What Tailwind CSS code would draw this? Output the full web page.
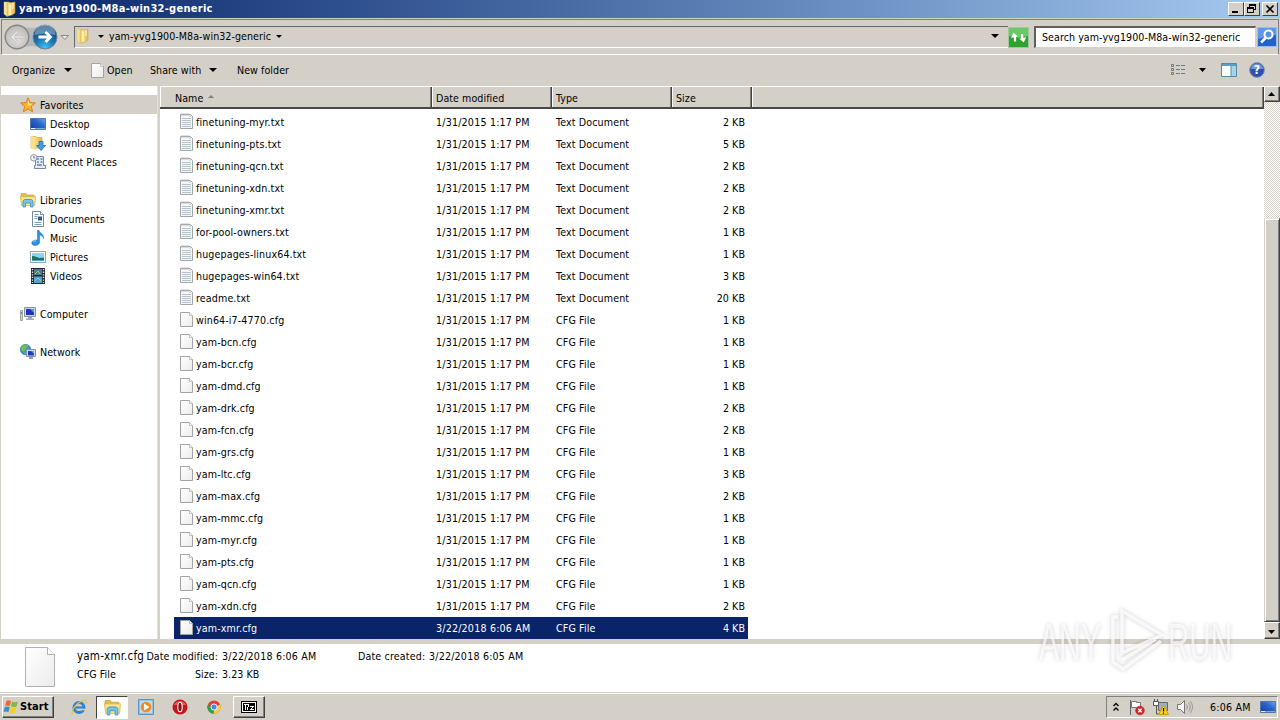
<!DOCTYPE html>
<html lang="en">
<head>
  <meta charset="UTF-8" />
  <title>yam-yvg1900-M8a-win32-generic</title>

  <script src="https://cdn.jsdelivr.net/npm/@tailwindcss/browser@4"></script>
</head>
<body class="w-[1280px] h-[720px] overflow-hidden bg-[#d4d0c8] text-black text-[10.6px] leading-[14px] tracking-[0.06px] font-['DejaVu_Sans_Condensed','DejaVu_Sans',sans-serif] font-stretch-condensed whitespace-nowrap flex flex-col relative">

  <!-- shared icons -->
  <svg class="absolute w-0 h-0">
    <defs>
      <linearGradient id="gold" x1="0" x2="1"><stop offset="0" stop-color="#fff3a8" /><stop offset="1" stop-color="#e3b544" /></linearGradient>
      <linearGradient id="screen" x1="0" y1="1" x2="1" y2="0"><stop offset="0" stop-color="#123a9c" /><stop offset=".6" stop-color="#2c68cf" /><stop offset="1" stop-color="#6ca8ec" /></linearGradient>
      <linearGradient id="page" x1="0" y1="0" x2="1" y2="1"><stop offset="0" stop-color="#fff" /><stop offset="1" stop-color="#ececec" /></linearGradient>
      <radialGradient id="bluebtn" cx=".5" cy=".95" r=".9"><stop offset="0" stop-color="#3cc4f4" /><stop offset=".5" stop-color="#1b6fae" /><stop offset="1" stop-color="#16406f" /></radialGradient>
      <radialGradient id="graybtn" cx=".5" cy=".6" r=".6"><stop offset="0" stop-color="#e4e2de" /><stop offset="1" stop-color="#b9b7b4" /></radialGradient>
    </defs>
    <symbol id="folder" viewBox="0 0 16 16">
      <path d="M2 1h5l1 1v12l-3 1.500L2 13z" fill="url(#gold)" stroke="#d6b04a" stroke-width=".5" />
      <path d="M6 2l7-1v11l-3 2-4 1z" fill="url(#gold)" stroke="#c99f35" stroke-width=".5" />
      <path d="M8 4v10M11 2v6" stroke="#fffbe0" />
    </symbol>
    <symbol id="txt" viewBox="0 0 16 18">
      <path d="M2.500 2.500h10l2 2v12h-12z" fill="#f4f6f7" stroke="#a2a6aa" />
      <path d="M4 1v3M6 1v3M8 1v3M10 1v3M12 2v3" stroke="#b4b4b4" stroke-width=".8" />
      <path d="M4 6.500h9M4 8.500h9M4 10.500h9M4 12.500h9M4 14.500h9" stroke="#b4c4cc" />
    </symbol>
    <symbol id="cfg" viewBox="0 0 16 18">
      <path d="M2.500 2.500h9l3 3v11h-12z" fill="url(#page)" stroke="#a2a2a2" />
      <path d="M11.500 2.500v3h3" fill="#fff" stroke="#b4b4b4" stroke-width=".8" />
    </symbol>
    <symbol id="star" viewBox="0 0 16 16">
      <path d="M8 .7l2.100 4.900 5.300.4-4.100 3.500 1.400 5.400L8 12l-4.700 2.900 1.400-5.400L.6 6l5.300-.4z" fill="#f9b32c" stroke="#d9781c" stroke-width=".9" />
      <path d="M8 3l1.300 3.500 3.200.4L8 9z" fill="#ffe787" />
    </symbol>
    <symbol id="desktop" viewBox="0 0 16 16">
      <path d="M.5 2.500h15v11h-15z" fill="url(#screen)" stroke="#5277b0" />
      <path d="M1 12.500h14" stroke="#7ea6dc" /><path d="M1 12.500h4" stroke="#e8f2fc" />
    </symbol>
    <symbol id="downloads" viewBox="0 0 16 16">
      <path d="M1 1.500h5l1 1h5v10.500H1z" fill="url(#gold)" stroke="#d0a83f" stroke-width=".7" />
      <path d="M5 2v13l-4-2.500V1z" fill="#f6e08a" />
      <path d="M9 6.500h4v4h2.500L11 15.500l-4.500-5H9z" fill="#3f9ee4" stroke="#1c6cb8" stroke-width=".8" />
    </symbol>
    <symbol id="recent" viewBox="0 0 16 16">
      <path d="M5.500 2.500h8v9h2v3h-11v-3h1z" fill="#e3ebf2" stroke="#75879a" />
      <path d="M7 5h2m1.500 0h2M7 8h2m1.500 0h2M7 11h5" stroke="#5f86ad" stroke-width="1.400" />
      <circle cx="3.800" cy="3.800" r="3.200" fill="#eef3f6" stroke="#8796a6" /><path d="M3.800 2v2h1.500" stroke="#555" fill="none" stroke-width=".7" />
    </symbol>
    <symbol id="libraries" viewBox="0 0 16 16">
      <path d="M1 3V1.500h5l1 1.500h7v4H1z" fill="#e4bd50" stroke="#c39b35" stroke-width=".6" />
      <path d="M.5 4.500h15l-.8 9H1.500z" fill="#f9e48c" stroke="#ceae4b" stroke-width=".7" />
      <path d="M3 15V9l1.500-1.500h7L13 9v6h-2.500v-4h-5v4z" fill="#76c5e8" stroke="#3992c4" stroke-width=".8" />
    </symbol>
    <symbol id="document" viewBox="0 0 16 16">
      <path d="M2.500.5h8l3 3v12h-11z" fill="#fbfdff" stroke="#76899c" />
      <path d="M10.500.5v3h3" fill="#fff" stroke="#76899c" />
      <path d="M4.500 3.500h4M4.500 5.500h3M4.500 7.500h3M4.500 11.500h7M4.500 13.500h7" stroke="#7b9dc1" /><path d="M8 5.500h4v4H8z" fill="#2d5d93" />
    </symbol>
    <symbol id="music" viewBox="0 0 16 16">
      <path d="M7.500 0h1.300c.4 3 5.300 3.500 4.800 8.500-.8-2-2.300-3.200-4-3.400V12c0 2-2 3.500-4.300 3.500S1.500 14.300 1.800 12.500 4.500 9.700 7.500 10z" fill="#2c93dc" stroke="#1770b8" stroke-width=".5" />
      <path d="M3 12c.5-1 1.700-1.300 3-1.200" stroke="#a5dcfa" fill="none" />
    </symbol>
    <symbol id="picture" viewBox="0 0 16 16">
      <path d="M.5 2.500h15v11h-15z" fill="#fff" stroke="#8da5b8" />
      <path d="M2 4h12v8H2z" fill="#8fd3f2" /><path d="M2 7l4 1 3 1 5-.5V12H2z" fill="#1d6a8c" /><path d="M2 7c3 0 4 1 7 2l-7 1z" fill="#25754b" /><path d="M2 11h12v1H2z" fill="#49a5bd" />
    </symbol>
    <symbol id="video" viewBox="0 0 16 16">
      <path d="M1 0h14v16H1z" fill="#23272d" />
      <path d="M4 1h8v6H4z" fill="#4c7c93" /><path d="M4 8.500h8V15H4z" fill="#4aa6dd" /><path d="M5 6l3-3 2 3M5 13l3-3 3 3" stroke="#94d17b" fill="none" />
      <path d="M2.500 1v14M13.500 1v14" stroke="#e4e7ea" stroke-width="1.400" stroke-dasharray="1.300 1.300" />
    </symbol>
    <symbol id="computer" viewBox="0 0 16 16">
      <path d="M.5 4.500h2v10h-2z" fill="#d8dcd6" stroke="#9aa39e" /><path d="M1.500 6v2" stroke="#52ad4b" />
      <path d="M4.500 1.500h11v9h-11z" fill="#cfd7e3" stroke="#8590a0" /><path d="M6 3h8v6H6z" fill="#1c34bd" /><path d="M10 3h4v4z" fill="#6490ed" />
      <path d="M8 11h4v1.500h2V14H6v-1.500h2z" fill="#9eabba" />
    </symbol>
    <symbol id="network" viewBox="0 0 16 16">
      <circle cx="5.500" cy="5.500" r="5.200" fill="#3796d9" stroke="#2168a4" stroke-width=".6" /><path d="M2 2c3-2 6-1 6 0S5 4 5 6s-3 2-4-1zM4 8l3 1-1 1.700z" fill="#74c24d" />
      <path d="M6.500 5.500h9v7h-9z" fill="#d4dce8" stroke="#8490a4" /><path d="M8 7h6v4.500H8z" fill="#1c3cc2" /><path d="M11 7h3v3z" fill="#6b9cf0" />
      <path d="M9 13h4v2H9z" fill="#8fa0b4" />
    </symbol>
  </svg>

  <!-- title bar -->
  <header class="h-[18px] shrink-0 flex items-center bg-linear-to-r from-[#0a246a] to-[#a6caf0] text-white">
    <svg class="w-4 h-4 ml-[2px] mr-[1px]"><use href="#folder" /></svg>
    <h1 class="font-bold text-[11px] tracking-[0.27px]">yam-yvg1900-M8a-win32-generic</h1>
    <div class="ml-auto mr-[2px] flex text-black">
      <button class="w-4 h-[14px] bg-[#d4d0c8] border border-t-white border-l-white border-r-[#404040] border-b-[#404040]"><svg class="w-[14px] h-3"><path d="M3 9h6" stroke="#000" stroke-width="2" /></svg></button>
      <button class="w-4 h-[14px] bg-[#d4d0c8] border border-t-white border-l-white border-r-[#404040] border-b-[#404040]"><svg class="w-[14px] h-3" fill="none" stroke="#000" shape-rendering="crispEdges"><path d="M4.500 4V1.500h6v5H9M4 2.500h7M2.500 4.500h6v5h-6zM2 5.500h7" /></svg></button>
      <button class="w-4 h-[14px] ml-[2px] bg-[#d4d0c8] border border-t-white border-l-white border-r-[#404040] border-b-[#404040]"><svg class="w-[14px] h-3"><path d="M3.500 2.500l7 7M10.500 2.500l-7 7" stroke="#000" stroke-width="1.600" /></svg></button>
    </div>
  </header>

  <!-- navigation -->
  <nav class="h-[36px] shrink-0 mt-[1px] ml-[1px] mr-[1px] border-t border-l border-[#808080] border-b border-b-white border-r border-r-[#808080] flex items-center">
    <svg class="w-[68px] h-[30px] ml-[1px] mr-[1px] shrink-0">
      <path d="M14 3Q28 9 42 3L42 27Q28 21 14 27z" fill="#b4b8bc" />
      <circle cx="14" cy="15" r="11.800" fill="url(#graybtn)" stroke="#858585" stroke-width="1.400" />
      <path d="M20 15H9m5-5l-5 5 5 5" fill="none" stroke="#bdbbb8" stroke-width="3" /><path d="M20 15H9m5-5l-5 5 5 5" fill="none" stroke="#e6e5e3" stroke-width="1.600" />
      <circle cx="42" cy="15" r="12" fill="url(#bluebtn)" stroke="#68849d" />
      <path d="M31.500 13a10.500 10.500 0 0121 0q-10-3-21 0z" fill="#bad4e8" opacity=".45" />
      <path d="M35.500 15h12m-5-5l5 5-5 5" fill="none" stroke="#fff" stroke-width="2.800" />
      <path d="M58 13.500h7.500l-3.700 4z" fill="#eceae5" stroke="#8c8a83" />
    </svg>
    <div class="h-[22px] w-[934px] ml-[2px] border-t border-l border-[#606870] border-b border-b-white flex items-center pb-[2px]">
      <svg class="w-4 h-4 mr-[7px]"><use href="#folder" /></svg>
      <svg class="w-[6px] h-[3px] mr-[5px]"><path d="M0 0h6L3 3z" /></svg>
      <span class="w-[162px]">yam-yvg1900-M8a-win32-generic</span>
      <svg class="w-[6px] h-[3px] ml-[5px]"><path d="M0 0h6L3 3z" /></svg>
      <svg class="w-[8px] h-[4px] ml-auto mr-[9px]"><path d="M0 0h8L4 4z" /></svg>
    </div>
    <svg class="w-[21px] h-[21px] ml-0 shrink-0"><path d="M.5.5h20v20H.5z" fill="#2da32f" stroke="#a2c5a2" /><path d="M1 1h19v8Q10 12 1 9z" fill="#69c965" /><path d="M7 14.500V8M14 7v6" stroke="#fff" stroke-width="2.200" /><path d="M3 9.500L6.500 5 10 9.500zM11 12l3.500 4.500L18 12z" fill="#fff" transform="rotate(-12 10 10)" /></svg>
    <div class="w-[222px] h-[22px] ml-[5px] shrink-0 bg-white border-t-2 border-l-2 border-[#62605c] border-b border-b-[#d4d0c8] border-r border-r-[#d4d0c8] pl-[6px] pb-[1px] flex items-center"><span>Search yam-yvg1900-M8a-win32-generic</span></div>
    <svg class="w-[20px] h-[20px] ml-[1px] shrink-0"><path d="M.5.5h19v19H.5z" fill="#2361cf" stroke="#9bbbe8" /><path d="M1 1h18v7L1 12z" fill="#5e96e8" /><circle cx="11.500" cy="7.500" r="4" fill="#5a92e0" stroke="#fff" stroke-width="2" /><path d="M8.500 11L4 15.500" stroke="#fff" stroke-width="2.500" /></svg>
  </nav>

  <!-- command bar -->
  <div class="h-[31px] shrink-0 flex items-center pl-3 pb-[2px]">
    <span class="w-[44px]">Organize</span>
    <svg class="w-[8px] h-[4px] ml-2 mr-[17px]"><path d="M0 0h8L4 4z" /></svg>
    <svg class="w-4 h-[18px] mr-[2px]"><use href="#cfg" /></svg>
    <span class="w-[43px]">Open</span>
    <span class="w-[52px]">Share with</span>
    <svg class="w-[8px] h-[4px] ml-[7px] mr-5"><path d="M0 0h8L4 4z" /></svg>
    <span>New folder</span>
    <svg class="w-[16px] h-[14px] ml-auto mr-[13px]" fill="none"><path d="M1.500 1.500h2v2h-2zM1.500 5.500h2v2h-2zM1.500 9.500h2v2h-2z" stroke="#777" /><path d="M6 2.500h4m1 0h4M6 6.500h4m1 0h4M6 10.500h4m1 0h4" stroke="#687c93" /></svg>
    <svg class="w-[7px] h-[4px] mr-[15px]"><path d="M0 0h7L3.500 4z" /></svg>
    <svg class="w-4 h-[14px] mr-[12px]"><path d="M.5.5h15v13H.5z" fill="#fff" stroke="#5489a9" /><path d="M1 1h14v2H1z" fill="#5c9cc0" /><path d="M10 3h5v10h-5z" fill="#a5d4ea" /><path d="M10 3v10" stroke="#5489a9" /></svg>
    <svg class="w-4 h-4 mr-[15px]"><circle cx="8" cy="8" r="7.400" fill="#2a50b4" stroke="#8c96a8" /><path d="M2 7a6 5.500 0 0112 0z" fill="#7292d8" /><text x="8" y="12.200" text-anchor="middle" font-size="12" font-weight="bold" fill="#fff">?</text></svg>
  </div>

  <!-- panes -->
  <main class="h-[553px] shrink-0 flex">
    <aside class="w-[158px] shrink-0 bg-white border-l border-l-[#d4d0c8] pt-[9px] border-r border-r-[#e4e2dc]">
      <ul id="tree"></ul>
    </aside>
    <div class="w-[2px] shrink-0 bg-[#d4d0c8]"></div>

    <section class="w-[1104px] shrink-0 bg-white flex flex-col">
      <div class="h-[23px] shrink-0 mb-[2px] flex bg-[#d4d0c8] border-t border-t-white border-b-2 border-b-[#484848]">
        <div class="w-[272px] pl-[14px] pt-[2px] flex items-center border-l border-l-white border-r border-r-[#404040] shadow-[inset_-1px_0_#808080]"><span>Name</span><svg class="w-[6px] h-[3px] ml-[5px] mb-[4px]"><path d="M0 3h6L3 0z" fill="#808080" /></svg></div>
        <div class="w-[120px] pl-[3px] pt-[2px] flex items-center border-l border-l-white border-r border-r-[#404040] shadow-[inset_-1px_0_#808080]">Date modified</div>
        <div class="w-[120px] pl-[3px] pt-[2px] flex items-center border-l border-l-white border-r border-r-[#404040] shadow-[inset_-1px_0_#808080]">Type</div>
        <div class="w-[80px] pl-[3px] pt-[2px] flex items-center border-l border-l-white border-r border-r-[#404040] shadow-[inset_-1px_0_#808080]">Size</div>
        <div class="flex-1 border-l border-l-white border-r border-r-[#404040] shadow-[inset_-1px_0_#808080]"></div>
      </div>
      <div id="files" class="pl-[14px] w-[588px]"></div>
    </section>

    <!-- scrollbar -->
    <div class="w-4 shrink-0 flex flex-col bg-[repeating-conic-gradient(#fff_0_25%,#d4d0c8_0_50%)] bg-[length:2px_2px]">
      <button class="h-4 bg-[#d4d0c8] border border-t-white border-l-white border-r-[#404040] border-b-[#404040] shadow-[inset_-1px_-1px_#808080]"><svg class="w-[14px] h-[14px]"><path d="M3 9h7L6.500 5z" /></svg></button>
      <div class="mt-[116px] h-[404px] bg-[#d4d0c8] border border-t-[#e8e6e0] border-l-[#d4d0c8] border-r-[#404040] border-b-[#404040] shadow-[inset_1px_1px_#fff,inset_-1px_-1px_#808080]"></div>
      <button class="h-[17px] bg-[#d4d0c8] border border-t-white border-l-white border-r-[#404040] border-b-[#404040] shadow-[inset_-1px_-1px_#808080]"><svg class="w-[14px] h-[14px]"><path d="M3 6h7l-3.500 4z" /></svg></button>
    </div>
  </main>

  <!-- details pane -->
  <section class="h-[53px] shrink-0 border-t-[5px] border-[#d4d0c8] bg-white flex">
    <svg class="w-[34px] h-[42px] ml-[23px] mt-[2px] shrink-0"><path d="M2.500 1.500h22l7 7v32h-29z" fill="url(#page)" stroke="#b0b0b0" /><path d="M24.500 1.500v7h7" fill="#fff" stroke="#b0b0b0" /></svg>
    <div class="ml-[20px] mt-[5px] w-[68px] shrink-0 flex flex-col gap-[4px]"><span class="text-[11.500px] tracking-[0.2px]">yam-xmr.cfg</span><span>CFG File</span></div>
    <div class="ml-[3px] mt-[5px] w-[70px] shrink-0 flex flex-col gap-[4px] items-end"><span>Date modified:</span><span>Size:</span></div>
    <div class="ml-[4px] mt-[5px] w-[136px] shrink-0 flex flex-col gap-[4px]"><span class="tracking-[0.2px]">3/22/2018 6:06 AM</span><span>3.23 KB</span></div>
    <span class="mt-[5px] w-[71px] tracking-[0.15px]">Date created:</span>
    <span class="mt-[5px] tracking-[0.2px]">3/22/2018 6:05 AM</span>
  </section>

  <!-- taskbar -->
  <footer class="h-[28px] shrink-0 border-t border-t-[#d4d0c8] shadow-[inset_0_1px_#fff] flex items-center pt-[1px]">
    <button class="w-[52px] h-[22px] ml-[2px] shrink-0 border border-t-white border-l-white border-r-[#404040] border-b-[#404040] shadow-[inset_-1px_-1px_#808080] flex items-center">
      <svg class="w-[16px] h-[16px] shrink-0 mr-[1px]"><path d="M3.500 2Q5.500.7 8 2L7 7Q4.500 6 2 7z" fill="#ee6a32" /><path d="M9 2.500q3 1.300 6 0L13.500 7.500Q11 8.500 8 7.500z" fill="#7fbb3c" /><path d="M1.700 8Q4.500 7 6.800 8L5.500 13Q3 12 .5 13z" fill="#3f8ad8" /><path d="M7.700 8.500q2.800 1 5.500 0L12 13.500Q9 14.700 6.500 13.500z" fill="#f8c82f" /></svg>
      <span class="font-bold text-[11px]">Start</span>
    </button>
    <svg class="w-4 h-4 ml-[17px]"><circle cx="8" cy="8.500" r="5" fill="none" stroke="#2c83d8" stroke-width="3" /><path d="M4.500 8.500H13" stroke="#2c83d8" stroke-width="2.200" /><path d="M10 10.500h5" stroke="#d4d0c8" stroke-width="1.500" /><path d="M2 15C-1 14 3 7 8 3.500S16 1 15 4.500" fill="none" stroke="#e8c249" stroke-width="1.200" /></svg>
    <button class="w-[32px] h-[23px] ml-[9px] bg-white border border-t-[#404040] border-l-[#404040] border-r-white border-b-white flex items-center justify-center"><svg class="w-[17px] h-[17px]"><use href="#libraries" /></svg></button>
    <svg class="w-4 h-4 ml-[10px]"><path d="M.5.5h15v15H.5z" fill="#8cc4ec" stroke="#5a93c4" /><path d="M2 2h12v12H2z" fill="#bddcf2" /><circle cx="8" cy="8" r="5.300" fill="#f38b1c" /><path d="M6 4.500v7L11.500 8z" fill="#fff" /></svg>
    <svg class="w-4 h-4 ml-[18px]"><circle cx="8" cy="8" r="7.500" fill="#c5161d" /><path d="M2 6a6.500 6 0 0112 0z" fill="#e35c5c" /><ellipse cx="8" cy="8" rx="2.200" ry="4.800" fill="#8a0e12" stroke="#fff" stroke-width="1.100" /></svg>
    <svg class="w-[14px] h-[14px] ml-[19px]" viewBox="0 0 16 16"><circle cx="8" cy="8" r="7.500" fill="#e33f35" /><path d="M1.200 5L7 15.500A7.500 7.500 0 011.200 5z" fill="#2fa24d" /><path d="M1.200 5l5 5L8 15.500A7.500 7.500 0 01.5 8z" fill="#2fa24d" /><path d="M9 8l6-3a7.500 7.500 0 01-7.500 10.500z" fill="#fbce3c" /><circle cx="8" cy="8" r="3.500" fill="#4689e8" stroke="#fff" /></svg>
    <button class="w-[32px] h-[22px] ml-[12px] border border-t-white border-l-white border-r-[#404040] border-b-[#404040] shadow-[inset_-1px_-1px_#808080] flex items-center justify-center"><svg class="w-4 h-3" shape-rendering="crispEdges"><path d="M0 0h16v12H0z" /><path d="M1.500 1.500h13v9h-13z" fill="none" stroke="#fff" /><path d="M3 3.500h5M7.500 4v2M6.500 6v3M4 4v5M9 5.500h4M12 6l-2 2M9 8.500h4" stroke="#fff" fill="none" /></svg></button>

    <div class="ml-auto mr-[2px] w-[172px] h-[22px] border border-t-[#808080] border-l-[#808080] border-r-white border-b-white flex items-center pl-[6px]">
      <svg class="w-[6px] h-[10px] shrink-0" fill="none" stroke="#000" stroke-width="1.300"><path d="M.5 4L3 1.500 5.500 4M.5 8.500L3 6l2.500 2.500" /></svg>
      <svg class="w-[17px] h-[17px] ml-[9px] shrink-0"><path d="M2.500 1v15" stroke="#666" /><path d="M3.500 2.500h5v1h4v6h-4v-1h-5z" fill="#fff" stroke="#777" /><circle cx="12" cy="11.500" r="4.300" fill="#d8242b" stroke="#a5151a" stroke-width=".6" /><path d="M10.300 9.800l3.400 3.400m0-3.400l-3.400 3.400" stroke="#fff" stroke-width="1.400" /></svg>
      <svg class="w-[17px] h-[17px] ml-[7px] shrink-0"><path d="M6.500 3.500h9v8h-9z" fill="#a5aeb8" stroke="#666" /><path d="M1.500 2.500h5v4h-5zM2.500 0v3M5.500 0v3" fill="#fff" stroke="#555" /><path d="M4.500 7v8h5" fill="none" stroke="#555" /><path d="M11.500 6.500L16.500 15.500h-10z" fill="#fcd51c" stroke="#c99c0c" /><path d="M11.500 9v3.500m0 1v1.200" stroke="#000" stroke-width="1.200" /></svg>
      <svg class="w-[17px] h-[16px] ml-[7px] shrink-0"><path d="M1.500 5.500h3l4-4v13l-4-4h-3z" fill="#f5f5f5" stroke="#777" /><path d="M10.500 5.500q2 2.500 0 5M12.500 3.500q3.500 4.500 0 9M14.500 2q4 6 0 12" fill="none" stroke="#8b8b8b" stroke-width=".8" /></svg>
      <span class="ml-[17px] w-[41px] shrink-0 tracking-[0.2px]">6:06 AM</span>
      <svg class="w-[16px] h-[16px] ml-[9px] shrink-0"><use href="#desktop" /></svg>
    </div>
  </footer>

  <!-- watermark over the window -->
  <div class="absolute left-[1030px] top-[600px] pointer-events-none">
    <svg class="w-[212px] h-[80px] drop-shadow-[0_0_2px_#00000040]" fill="none" stroke="#fff" stroke-opacity=".75" stroke-width="3.500">
      <text x="9" y="60" textLength="62" lengthAdjust="spacingAndGlyphs" letter-spacing="0" font-family="Liberation Sans" font-size="52" fill="#fff" fill-opacity=".7" stroke="none">ANY</text>
      <path d="M92 11v42l40-18zM88 17h-5v45l10 7 38-28M92 60l34-21" />
      <text x="138" y="60" textLength="64" lengthAdjust="spacingAndGlyphs" letter-spacing="0" font-family="Liberation Sans" font-size="52" fill="#fff" fill-opacity=".7" stroke="none">RUN</text>
    </svg>
  </div>

  <script>
    const tree = [
      ["star", "Favorites", "top"],
      ["desktop", "Desktop"],
      ["downloads", "Downloads"],
      ["recent", "Recent Places"],
      null,
      ["libraries", "Libraries", "top"],
      ["document", "Documents"],
      ["music", "Music"],
      ["picture", "Pictures"],
      ["video", "Videos"],
      null,
      ["computer", "Computer", "top"],
      null,
      ["network", "Network", "top"],
    ];

    document.getElementById("tree").innerHTML = tree.map((item, i) => {
      if (!item) return `<li class="h-[19px]"></li>`;
      const [icon, label, level] = item;
      const pad = level === "top" ? "pl-[19px]" : "pl-[29px]";
      const bg = i === 0 ? "bg-[#d4d0c8]" : "";
      return `<li class="h-[19px] flex items-center gap-[4px] ${pad} ${bg}">
        <svg class="w-4 h-4"><use href="#${icon}" /></svg><span>${label}</span>
      </li>`;
    }).join("");

    const old = "1/31/2015 1:17 PM";
    const files = [
      ["finetuning-myr.txt", 2], ["finetuning-pts.txt", 5], ["finetuning-qcn.txt", 2],
      ["finetuning-xdn.txt", 2], ["finetuning-xmr.txt", 2], ["for-pool-owners.txt", 1],
      ["hugepages-linux64.txt", 1], ["hugepages-win64.txt", 3], ["readme.txt", 20],
      ["win64-i7-4770.cfg", 1], ["yam-bcn.cfg", 1], ["yam-bcr.cfg", 1],
      ["yam-dmd.cfg", 1], ["yam-drk.cfg", 2], ["yam-fcn.cfg", 2],
      ["yam-grs.cfg", 1], ["yam-ltc.cfg", 3], ["yam-max.cfg", 2],
      ["yam-mmc.cfg", 1], ["yam-myr.cfg", 1], ["yam-pts.cfg", 1],
      ["yam-qcn.cfg", 1], ["yam-xdn.cfg", 2], ["yam-xmr.cfg", 4, "3/22/2018 6:06 AM"],
    ];

    document.getElementById("files").innerHTML = files.map(([name, size, date]) => {
      const isText = name.endsWith(".txt");
      const selected = date ? "bg-[#0a246a] text-white" : "";
      return `<div class="h-[22px] flex items-center pl-[4px] pr-[3px] ${selected}">
        <svg class="w-4 h-[18px] mr-[2px] mb-[2px]"><use href="#${isText ? "txt" : "cfg"}" /></svg>
        <span class="w-[240px] tracking-[0.13px]">${name}</span>
        <span class="w-[120px] tracking-[0.2px]">${date || old}</span>
        <span class="w-[120px] tracking-[0.13px]">${isText ? "Text Document" : "CFG File"}</span>
        <span class="flex-1 text-right">${size} KB</span>
      </div>`;
    }).join("");
  </script>

</body>
</html>
